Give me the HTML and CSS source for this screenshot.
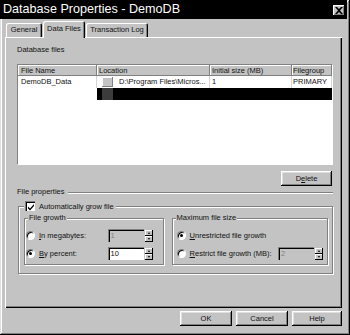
FILE: index.html
```html
<!DOCTYPE html>
<html>
<head>
<meta charset="utf-8">
<link rel="stylesheet" href="styles.css">
</head>
<body>
<div class="window">
  <div class="titlebar">
    <span class="title">Database Properties - DemoDB</span>
    <span class="close"><svg width="8" height="7" viewBox="0 0 8 7"><path d="M0 0h2l2 2 2-2h2L5 3.5 8 7H6L4 5 2 7H0l3-3.5z" fill="#000"/></svg></span>
  </div>
  <div class="tabs">
    <div class="tab t-general">General</div>
    <div class="tab t-data active">Data Files</div>
    <div class="tab t-log">Transaction Log</div>
  </div>
  <div class="panel">
    <div class="label">Database files</div>
    <div class="grid">
      <div class="row head">
        <div class="c c1">File Name</div>
        <div class="c c2">Location</div>
        <div class="c c3">Initial size (MB)</div>
        <div class="c c4">Filegroup</div>
      </div>
      <div class="row r1">
        <div class="c c1">DemoDB_Data</div>
        <div class="c c2"><span class="browse"></span><span class="loc">D:\Program Files\Micros...</span></div>
        <div class="c c3">1</div>
        <div class="c c4">PRIMARY</div>
      </div>
      <div class="row r2">
        <div class="c c1"></div>
        <div class="c c2 sel"><span class="browse dark"></span></div>
        <div class="c c3 sel"></div>
        <div class="c c4 sel"></div>
      </div>
    </div>
    <div class="del-row"><div class="btn del">D<u>e</u>lete</div></div>
    <div class="sep"><span class="sep-text">File properties</span><span class="sep-line"></span></div>
    <fieldset class="grow">
      <legend class="grow-legend"><span class="check"><svg width="8" height="8" viewBox="0 0 8 8"><path d="M1 3.5l2 2 4-4.5v2l-4 4.5-2-2z" fill="#000"/></svg></span>Automatically grow file</legend>
      <div class="groups">
        <fieldset class="sub fg">
          <legend class="sub-legend">File growth</legend>
          <div class="opt first"><span class="radio"></span><span class="otext"><u>I</u>n megabytes:</span><span class="spin"><span class="field dis">1</span><span class="arrows"><span class="arr up"></span><span class="arr down"></span></span></span></div>
          <div class="opt"><span class="radio on"></span><span class="otext"><u>B</u>y percent:</span><span class="spin"><span class="field">10</span><span class="arrows"><span class="arr up"></span><span class="arr down"></span></span></span></div>
        </fieldset>
        <fieldset class="sub mx">
          <legend class="sub-legend">Maximum file size</legend>
          <div class="opt first"><span class="radio on"></span><span class="otext"><u>U</u>nrestricted file growth</span></div>
          <div class="opt"><span class="radio"></span><span class="otext"><u>R</u>estrict file growth (MB):</span><span class="spin"><span class="field dis">2</span><span class="arrows"><span class="arr up"></span><span class="arr down"></span></span></span></div>
        </fieldset>
      </div>
    </fieldset>
  </div>
  <div class="buttons">
    <div class="btn b-ok">OK</div>
    <div class="btn b-cancel">Cancel</div>
    <div class="btn b-help">Help</div>
  </div>
</div>
</body>
</html>
```

FILE: styles.css
```css
* { box-sizing: border-box; }
html, body { margin: 0; padding: 0; }
body { width: 350px; height: 335px; overflow: hidden; background: #c0c0c0; font-family: "Liberation Sans", Arial, sans-serif; font-size: 7.5px; color: #111; }

.window {
  width: 350px; height: 335px; background: #c3c3c3;
  box-shadow: inset -1px -1px 0 #000, inset 1px 1px 0 #dfdfdf, inset -2px -2px 0 #808080, inset 2px 2px 0 #fff;
  display: flex; flex-direction: column;
}

.titlebar {
  height: 19px; background: #000; margin-right: 3px;
  display: flex; align-items: center; justify-content: space-between;
  padding-left: 3px;
}
.title { color: #fff; font-size: 12.6px; line-height: 19px; white-space: nowrap; }
.close {
  width: 12px; height: 11px; margin-right: 2px; margin-top: 1px; background: #c3c3c3;
  box-shadow: inset -1px -1px 0 #000, inset 1px 1px 0 #fff, inset -2px -2px 0 #808080;
  display: flex; align-items: center; justify-content: center;
}

.tabs { display: flex; align-items: flex-end; height: 16px; margin-top: 2px; padding-left: 6px; }
.tab {
  height: 14px; line-height: 13px; text-align: center; background: #c3c3c3; white-space: nowrap;
  border-radius: 2px 2px 0 0;
  box-shadow: inset 1px 1px 0 #fff, inset -1px 0 0 #000, inset -2px 0 0 #808080;
}
.t-general { width: 36px; }
.t-data { width: 42px; margin-left: 1px; }
.t-log { width: 62px; margin-left: 1px; }
.tab.active { height: 17px; line-height: 15px; margin-bottom: -1px; position: relative; z-index: 2; }

.panel {
  margin-left: 5px; width: 337px; height: 271px;
  padding: 7px 9px 0 12px;
  box-shadow: inset 1px 1px 0 #fff, inset -1px -1px 0 #000, inset -2px -2px 0 #808080;
}
.label { height: 12px; line-height: 12px; }

.grid {
  margin-top: 8px; height: 101px; background: #fff;
  border: 1px solid; border-color: #808080 #fff #fff #808080;
}
.row { display: flex; height: 12px; }
.row.head { height: 11px; background: #c3c3c3; }
.c { line-height: 12px; white-space: nowrap; overflow: hidden; padding-left: 2px; }
.head .c { line-height: 11px; box-shadow: inset -1px -1px 0 #808080, inset 1px 1px 0 #fff; }
.c1 { width: 79px; }
.c2 { width: 113px; display: flex; align-items: center; }
.c3 { width: 82px; }
.c4 { width: 40px; padding-left: 1px; }
.r1 .c { box-shadow: inset -1px 0 0 #d4d4d4; }
.c1 { padding-left: 3px; }
.browse {
  width: 11px; height: 10px; margin-left: 3px; background: #c3c3c3; flex: none;
  box-shadow: inset -1px -1px 0 #808080, inset 1px 1px 0 #fff;
}
.browse.dark { background: #3c3c3c; box-shadow: none; height: 12px; }
.loc { margin-left: 6px; }
.sel { background: #000; }

.del-row { margin-top: 6px; display: flex; justify-content: flex-end; padding-right: 1px; }
.btn {
  height: 15px; line-height: 15px; text-align: center; background: #c3c3c3;
  box-shadow: inset -1px -1px 0 #000, inset 1px 1px 0 #fff, inset -2px -2px 0 #808080, inset 2px 2px 0 #dfdfdf;
}
.del { width: 51px; }

.sep { height: 11px; display: flex; align-items: center; }
.sep-text { line-height: 11px; padding-right: 3px; }
.sep-line { flex: 1; height: 2px; border-top: 1px solid #808080; border-bottom: 1px solid #fff; margin-top: 2px; }

fieldset { margin: 0; min-width: 0; border: 1px solid #808080; box-shadow: inset 1px 1px 0 #fff, 1px 1px 0 #fff; }
legend { padding: 0 2px; background: #c3c3c3; }

.grow { margin: 3px 0 0 1px; width: 315px; height: 74px; padding: 1px 4px 7px 5px; }
.grow-legend { height: 12px; display: flex; align-items: center; margin-left: 0; padding: 0 2px 0 1px; }
.check {
  width: 10px; height: 10px; background: #fff; margin-right: 4px;
  box-shadow: inset 1px 1px 0 #808080, inset 2px 2px 0 #000;
  display: flex; align-items: center; justify-content: center; padding: 1px 0 0 1px;
}
.groups { display: flex; gap: 8px; }
.sub { height: 52px; padding: 0 0 0 1px; }
.sub-legend { height: 10px; line-height: 10px; margin-left: 2px; padding: 0 1px; }
.fg { width: 140px; padding-right: 10px; }
.mx { width: 157px; padding-right: 4px; padding-left: 1px; }
.mx .radio { margin-left: 3px; }

.opt { display: flex; align-items: center; height: 13px; margin-top: 5px; }
.opt.first { margin-top: 6px; }
.radio {
  width: 9px; height: 9px; border-radius: 50%; background: #fff; flex: none;
  border: 1px solid; border-color: #808080 #fff #fff #808080;
  box-shadow: inset 1px 1px 0 #000;
  display: flex; align-items: center; justify-content: center;
}
.radio.on::after { content: ""; width: 3px; height: 3px; border-radius: 50%; background: #000; }
.otext { margin-left: 4px; white-space: nowrap; }
.spin { margin-left: auto; display: flex; align-items: center; }
.field {
  width: 36px; height: 13px; line-height: 13px; background: #fff; padding-left: 3px;
  box-shadow: inset 1px 1px 0 #808080, inset 2px 2px 0 #000;
}
.field.dis { background: #c3c3c3; color: #808080; }
.arrows { display: flex; flex-direction: column; margin-left: 1px; }
.arr {
  width: 8px; height: 6px; background: #c3c3c3; position: relative;
  box-shadow: inset -1px -1px 0 #000, inset 1px 1px 0 #fff;
  display: flex; align-items: center; justify-content: center;
}
.arr.up::after { content: ""; border-left: 1.5px solid transparent; border-right: 1.5px solid transparent; border-bottom: 2px solid #000; }
.arr.down::after { content: ""; border-left: 1.5px solid transparent; border-right: 1.5px solid transparent; border-top: 2px solid #000; }

.buttons { display: flex; justify-content: flex-end; gap: 4px; margin-top: 3px; padding-right: 8px; }
.b-ok, .b-cancel { width: 52px; }
.b-help { width: 50px; }
```
